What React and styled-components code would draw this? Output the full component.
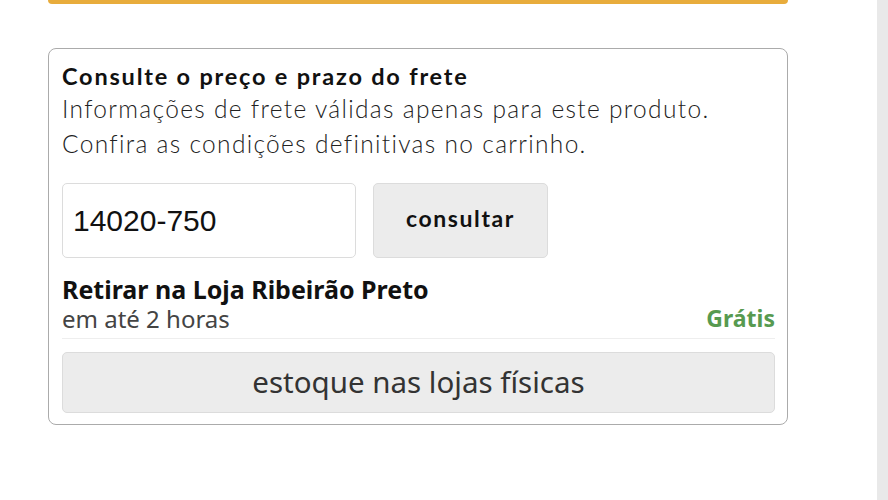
import React, { useState } from "react";
import styled, { createGlobalStyle } from "styled-components";

const GlobalStyle = createGlobalStyle`
    html, body {
        margin: 0;
        padding: 0;
        background: #ffffff;
    }
    * {
        box-sizing: border-box;
    }
`;

const Page = styled.div`
    display: flex;
    width: 888px;
    height: 500px;
    overflow: hidden;
`;

const Main = styled.div`
    flex: 1;
    padding: 0 89px 0 48px;
    display: flex;
    flex-direction: column;
`;

const Rail = styled.div`
    width: 11px;
    background-color: #e9e9e9;
`;

const TopBar = styled.div`
    height: 4px;
    background-color: #e8ac3c;
    border-radius: 0 0 4px 4px;
    margin-bottom: 44px;
`;

const FreightCard = styled.section`
    border: 1.5px solid #ababab;
    border-radius: 8px;
    padding: 12px 12px 11px 13px;
    display: flex;
    flex-direction: column;
`;

const Title = styled.h2`
    margin: 0;
    font-family: Lato, "Noto Sans", sans-serif;
    font-weight: 700;
    font-size: 23.5px;
    letter-spacing: 1.8px;
    line-height: 30px;
    color: #111;
`;

const Info = styled.p`
    margin: 0;
    font-family: Lato, "Noto Sans", sans-serif;
    font-weight: 300;
    font-size: 24.5px;
    letter-spacing: 1.32px;
    line-height: 35px;
    color: #222;
`;

const SearchRow = styled.div`
    display: flex;
    gap: 17px;
    margin-top: 22px;
`;

const ZipInput = styled.input`
    width: 294px;
    height: 75px;
    padding: 0 10px;
    border: 1.5px solid #dcdcdc;
    border-radius: 5px;
    font-family: "Liberation Sans", Arial, sans-serif;
    font-size: 30px;
    color: #111;
    outline: none;
`;

const SearchButton = styled.button`
    width: 175px;
    height: 75px;
    border: 1.5px solid #dcdcdc;
    border-radius: 5px;
    background-color: #ececec;
    font-family: Lato, "Noto Sans", sans-serif;
    font-weight: 700;
    font-size: 23px;
    letter-spacing: 1.6px;
    color: #111;
    padding-bottom: 6px;
    cursor: pointer;
`;

const Option = styled.div`
    margin-top: 17px;
    padding-bottom: 5px;
    border-bottom: 1.5px solid #eeeeee;
    display: flex;
    align-items: flex-end;
    justify-content: space-between;
    font-family: "Noto Sans", "Open Sans", sans-serif;
    font-stretch: 87.5%;
`;

const OptionText = styled.div`
    display: flex;
    flex-direction: column;
`;

const OptionName = styled.span`
    font-weight: 700;
    font-size: 25px;
    line-height: 29px;
    color: #111;
`;

const OptionTime = styled.span`
    font-weight: 400;
    font-size: 24px;
    line-height: 29px;
    color: #444;
`;

const OptionPrice = styled.span`
    font-weight: 700;
    font-size: 23px;
    line-height: 29px;
    color: ${(p) => (p.$free ? "#579a50" : "#111")};
`;

const StockButton = styled.button`
    margin-top: 13px;
    height: 61px;
    width: 100%;
    border: 1.5px solid #dcdcdc;
    border-radius: 5px;
    background-color: #ececec;
    font-family: "Noto Sans", "Open Sans", sans-serif;
    font-stretch: 87.5%;
    font-size: 29.5px;
    color: #333;
    padding-bottom: 4px;
    cursor: pointer;
`;

const App = () => {
    const [zip, setZip] = useState("14020-750");
    return (
        <>
            <GlobalStyle />
            <Page>
                <Main>
                    <TopBar />
                    <FreightCard>
                        <Title>Consulte o preço e prazo do frete</Title>
                        <Info>
                            Informações de frete válidas apenas para este produto.
                            <br />
                            Confira as condições definitivas no carrinho.
                        </Info>
                        <SearchRow>
                            <ZipInput value={zip} onChange={(e) => setZip(e.target.value)} />
                            <SearchButton>consultar</SearchButton>
                        </SearchRow>
                        <Option>
                            <OptionText>
                                <OptionName>Retirar na Loja Ribeirão Preto</OptionName>
                                <OptionTime>em até 2 horas</OptionTime>
                            </OptionText>
                            <OptionPrice $free>Grátis</OptionPrice>
                        </Option>
                        <StockButton>estoque nas lojas físicas</StockButton>
                    </FreightCard>
                </Main>
                <Rail />
            </Page>
        </>
    );
};

export default App;
